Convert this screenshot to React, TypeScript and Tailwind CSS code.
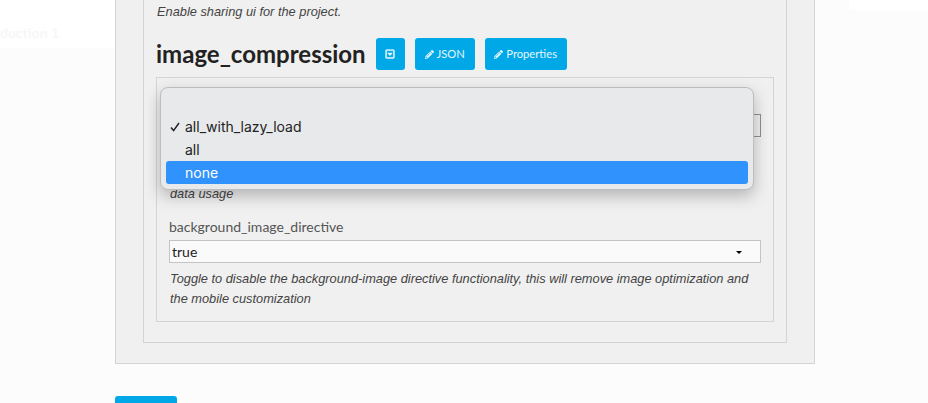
import { FaPencilAlt, FaRegCaretSquareDown } from "react-icons/fa";

const hint = "font-['Liberation_Sans',sans-serif] italic text-[12.8px] leading-[20px] text-[#444444]";
const label = "font-['Lato',sans-serif] text-[14px] leading-[20px] text-[#555555]";
const btn = "flex h-[32px] items-center justify-center rounded-[3px] bg-[#00a8e8] text-[#e4f6fd] font-['Lato',sans-serif] text-[11.2px]";

function FakeSelect({ value, focused }: { value?: string; focused?: boolean }) {
  return (
    <div className={`relative flex h-[23px] items-center border px-[2px] font-['Lato',sans-serif] text-[14px] text-[#222222] ${focused ? "border-[#8f8f8f] bg-[#efefef]" : "border-[#c4c4c4] bg-[#fafafa]"}`}>
      {value}
      <span className="absolute right-[18px] top-[10px] h-0 w-0 border-x-[3px] border-t-[3px] border-x-transparent border-t-black" />
    </div>
  );
}

function Dropdown() {
  return (
    <div className="absolute left-[3px] top-[9px] h-[103px] w-[594px] rounded-[8px] border border-[#bdbdbd] bg-[#e8e9eb] px-[5px] pt-[27px] font-['Inter',sans-serif] text-[14px] text-[#222222] shadow-[0_6px_16px_rgba(0,0,0,0.25)]">
      <div className="relative flex h-[23px] items-center pl-[19px]">
        <svg className="absolute left-[4px] top-[7px]" width="10" height="10" viewBox="0 0 10 10" fill="none">
          <path d="M1 5.5 L3.6 8.6 L9 1" stroke="#222222" strokeWidth="1.5" />
        </svg>
        all_with_lazy_load
      </div>
      <div className="flex h-[23px] items-center pl-[19px]">all</div>
      <div className="flex h-[23px] items-center rounded-[3px] bg-[#3092fd] pl-[19px] text-white">none</div>
    </div>
  );
}

export default function App() {
  return (
    <div className="relative h-[403px] w-[928px] overflow-hidden bg-[#fcfcfc]">
      <div className="flex">
        <div className="h-[48px] w-[115px] bg-white">
          <div className="mt-[24px] whitespace-nowrap font-['Lato',sans-serif] text-[14px] font-bold leading-[18px] text-[#f7f7f7]">
            duction 1
          </div>
        </div>
        <div className="w-[700px]">
          <div className="mt-[-20px] h-[384px] border border-t-0 border-[#d4d4d4] bg-[#f0f0f0] px-[27px] pb-[20px]">
            <div className="h-full border-x border-b border-[#d4d4d4] px-[12px] pt-[22px]">
              <p className={`${hint} pl-[1px]`}>Enable sharing ui for the project.</p>
              <div className="mt-[16px] flex items-center">
                <h2 className="font-['Lato',sans-serif] text-[24px] font-bold leading-[32px] text-[#222222]">image_compression</h2>
                <button className={`${btn} ml-[10px] w-[29px]`}>
                  <FaRegCaretSquareDown size={10} stroke="currentColor" strokeWidth={30} />
                </button>
                <button className={`${btn} ml-[10px] w-[60px] gap-[3px]`}>
                  <FaPencilAlt size={9} />
                  JSON
                </button>
                <button className={`${btn} ml-[10px] w-[82px] gap-[3px]`}>
                  <FaPencilAlt size={9} />
                  Properties
                </button>
              </div>
              <div className="relative mt-[7px] h-[245px] border border-[#d4d4d4] px-[12px] pt-[36px]">
                <FakeSelect focused />
                <p className={`${hint} mt-[47px] pl-[1px]`}>data usage</p>
                <div className={`${label} mt-[13px]`}>background_image_directive</div>
                <div className="mt-[3px]">
                  <FakeSelect value="true" />
                </div>
                <p className={`${hint} mt-[6px] pl-[1px]`}>
                  Toggle to disable the background-image directive functionality, this will remove image optimization and the mobile customization
                </p>
                <Dropdown />
              </div>
            </div>
          </div>
          <button className="mt-[32px] block h-[32px] w-[62px] rounded-[3px] bg-[#00a8e8]" />
        </div>
        <div className="ml-[34px] h-[10px] w-[79px] bg-white" />
      </div>
    </div>
  );
}
